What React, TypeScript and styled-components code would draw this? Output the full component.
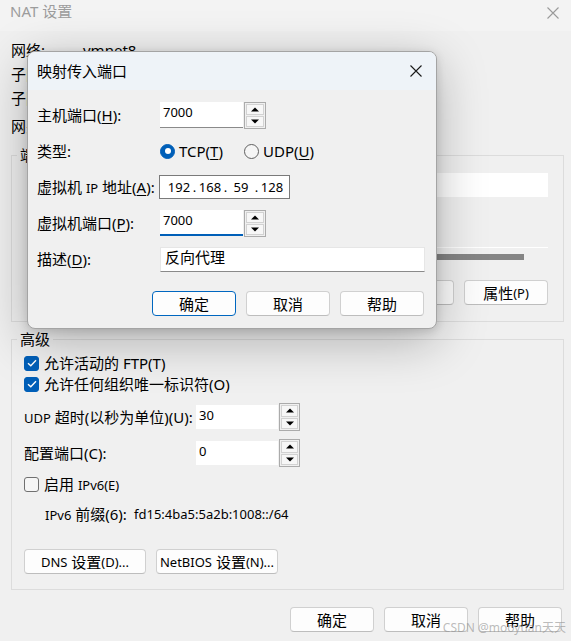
import React from "react";
import styled, { createGlobalStyle } from "styled-components";

const GlobalStyle = createGlobalStyle`
  html, body { margin: 0; padding: 0; background: #f0f0f0; }
  body { font-family: "Noto Sans", "Noto Sans CJK SC", sans-serif; color: #000; }
`;

const Window = styled.div`
  position: relative;
  width: 571px;
  height: 641px;
  overflow: hidden;
  background: #f0f0f0;
  font-size: 15px;
  line-height: 20px;
`;

const TitleBar = styled.div`
  height: 31px;
  box-sizing: border-box;
  padding: 1px 12px 0 10px;
  background: #f3f3f3;
  display: flex;
  align-items: flex-start;
  justify-content: space-between;
  color: #9c9c9c;
`;

const CloseGlyph = styled.div`
  display: flex;
  padding-top: 6px;
`;

const Body = styled.div`
  padding: 7px 7px 0 11px;
  display: flex;
  flex-direction: column;
`;

const InfoRow = styled.div<{ $gap?: number }>`
  display: flex;
  align-items: center;
  height: 24px;
  margin-top: ${({ $gap }) => $gap || 0}px;
`;

const InfoLabel = styled.span`
  width: 72px;
`;

const Group = styled.fieldset<{ $h: number; $top: number }>`
  margin: ${({ $top }) => $top}px 0 0 0;
  padding: 0 15px 0 12px;
  border: 1px solid #dcdcdc;
  min-width: 0;
  height: ${({ $h }) => $h}px;
  box-sizing: border-box;
  display: flex;
  flex-direction: column;
`;

const Legend = styled.legend`
  padding: 0 3px;
  margin-left: -7px;
  line-height: 20px;
`;

const ListBox = styled.div`
  margin-top: 8px;
  margin-left: 3px;
  height: 92px;
  display: flex;
  flex-direction: column;
`;

const ListHeader = styled.div`
  height: 24px;
  background: #fff;
`;

const ListArea = styled.div`
  flex: 1;
  border-bottom: 1px solid #fff;
`;

const HScroll = styled.div`
  height: 17px;
  display: flex;
  align-items: center;
  padding-right: 24px;
`;

const HThumb = styled.div`
  flex: 1;
  height: 6px;
  background: #858585;
`;

const ButtonRow = styled.div<{ $top: number; $justify?: string; $right?: number }>`
  display: flex;
  gap: 10px;
  margin-top: ${({ $top }) => $top}px;
  margin-right: ${({ $right }) => $right || 0}px;
  justify-content: ${({ $justify }) => $justify || "flex-end"};
`;

const Button = styled.div<{ $w?: number; $primary?: boolean }>`
  width: ${({ $w }) => $w || 84}px;
  height: 25px;
  box-sizing: border-box;
  border: 1px solid ${({ $primary }) => ($primary ? "#0067c0" : "#d0d0d0")};
  border-bottom-color: ${({ $primary }) => ($primary ? "#0067c0" : "#bdbdbd")};
  border-radius: 4px;
  background: #fdfdfd;
  display: flex;
  align-items: center;
  justify-content: center;
  font-size: 15px;
  white-space: nowrap;
`;

const SmallLatin = styled.span`
  font-size: 13px;
`;

const CheckRow = styled.div<{ $top: number }>`
  display: flex;
  align-items: center;
  gap: 5px;
  height: 20px;
  margin-top: ${({ $top }) => $top}px;
`;

const CheckBox = styled.div<{ $checked?: boolean }>`
  width: 15px;
  height: 15px;
  box-sizing: border-box;
  border-radius: 3px;
  background: ${({ $checked }) => ($checked ? "#005fb8" : "#f6f6f6")};
  border: 1px solid ${({ $checked }) => ($checked ? "#005fb8" : "#707070")};
  display: flex;
  align-items: center;
  justify-content: center;
`;

const FieldRow = styled.div<{ $top: number; $label: number }>`
  display: flex;
  align-items: center;
  height: 28px;
  margin-top: ${({ $top }) => $top}px;
  & > span:first-child {
    width: ${({ $label }) => $label}px;
    flex-shrink: 0;
  }
`;

const NumField = styled.div<{ $w: number; $h: number; $line?: "none" | "gray" | "focus" }>`
  width: ${({ $w }) => $w}px;
  height: ${({ $h }) => $h}px;
  box-sizing: border-box;
  background: #fff;
  padding: 0 3px;
  font-size: 13px;
  line-height: 20px;
  border-bottom: ${({ $line }) =>
    $line === "focus" ? "2px solid #005fb8" : $line === "gray" ? "1px solid #8a8a8a" : "none"};
`;

const SpinWrap = styled.div`
  display: flex;
  align-items: center;
  gap: 1px;
`;

const SpinBox = styled.div<{ $h: number; $w: number }>`
  width: ${({ $w }) => $w}px;
  height: ${({ $h }) => $h}px;
  box-sizing: border-box;
  border: 1px solid #ababab;
  padding: 1px;
  display: flex;
  flex-direction: column;
  gap: 1px;
  background: #f0f0f0;
`;

const SpinBtn = styled.div`
  flex: 1;
  border: 1px solid #d2d2d2;
  background: #f7f7f7;
  display: flex;
  align-items: center;
  justify-content: center;
`;

const PrefixRow = styled.div`
  display: flex;
  align-items: center;
  height: 20px;
  margin-top: 10px;
  padding-left: 21px;
  & > span:first-child {
    width: 89px;
  }
`;

const Value = styled.span`
  font-size: 13px;
`;

const Key = styled.span`
  text-decoration: underline;
  text-underline-offset: 2px;
`;

/* modal dialog on top of the NAT window */
const Dialog = styled.div`
  position: absolute;
  left: 27px;
  top: 51px;
  width: 410px;
  height: 278px;
  box-sizing: border-box;
  border: 1px solid #a4a4a4;
  border-radius: 8px;
  background: #f0f0f0;
  overflow: hidden;
  box-shadow: 0 12px 50px rgba(0, 0, 0, 0.28), 0 2px 10px rgba(0, 0, 0, 0.14);
`;

const DialogTitle = styled.div`
  height: 38px;
  background: #eef3f8;
  display: flex;
  align-items: center;
  justify-content: space-between;
  padding: 0 14px 0 9px;
`;

const DialogBody = styled.div`
  padding: 12px 11px 0 9px;
`;

const FormGrid = styled.div`
  display: grid;
  grid-template-columns: 123px 1fr;
  grid-auto-rows: 26px;
  row-gap: 10px;
  align-items: center;
`;

const RadioGroup = styled.div`
  display: flex;
  align-items: center;
`;

const RadioOption = styled.div<{ $w?: number }>`
  display: flex;
  align-items: center;
  gap: 4px;
  width: ${({ $w }) => ($w ? `${$w}px` : "auto")};
`;

const Radio = styled.div<{ $checked?: boolean }>`
  width: 15px;
  height: 15px;
  box-sizing: border-box;
  border-radius: 50%;
  background: ${({ $checked }) => ($checked ? "#005fb8" : "#f5f5f5")};
  border: 1px solid ${({ $checked }) => ($checked ? "#005fb8" : "#5f5f5f")};
  display: flex;
  align-items: center;
  justify-content: center;
  &::after {
    content: "";
    display: ${({ $checked }) => ($checked ? "block" : "none")};
    width: 6px;
    height: 6px;
    border-radius: 50%;
    background: #fff;
  }
`;

const IpBox = styled.div`
  margin-left: -1px;
  width: 131px;
  height: 24px;
  box-sizing: border-box;
  border: 1px solid #7a7a7a;
  background: #fff;
  padding-left: 6px;
  display: flex;
  align-items: center;
  font-size: 13px;
`;

const IpSeg = styled.span`
  width: 26px;
  text-align: center;
`;

const IpDot = styled.span`
  width: 5px;
  text-align: center;
`;

const TextField = styled.div`
  width: 265px;
  height: 25px;
  box-sizing: border-box;
  background: #fff;
  border: 1px solid #e6e6e6;
  border-bottom-color: #8a8a8a;
  padding: 0 4px;
  line-height: 19px;
`;

const Watermark = styled.div`
  position: absolute;
  right: 5px;
  bottom: 3px;
  font-size: 12px;
  color: rgba(150, 150, 150, 0.65);
`;

const Cross = ({ size, color }: { size: number; color: string }) => (
  <svg width={size} height={size} viewBox="0 0 12 12">
    <path d="M0.5 0.5 L11.5 11.5 M11.5 0.5 L0.5 11.5" stroke={color} strokeWidth="1.1" fill="none" />
  </svg>
);

const Tick = () => (
  <svg width="10" height="8" viewBox="0 0 10 8">
    <path d="M1 4.2 L3.8 6.8 L9 1.2" stroke="#fff" strokeWidth="1.4" fill="none" />
  </svg>
);

const Arrow = ({ down }: { down?: boolean }) => (
  <svg width="8" height="5" viewBox="0 0 8 5">
    <polygon points={down ? "0,0.5 8,0.5 4,4.5" : "0,4.5 8,4.5 4,0.5"} fill="#000" />
  </svg>
);

const Spinner = ({ w, h }: { w: number; h: number }) => (
  <SpinBox $w={w} $h={h}>
    <SpinBtn>
      <Arrow />
    </SpinBtn>
    <SpinBtn>
      <Arrow down />
    </SpinBtn>
  </SpinBox>
);

export default function App() {
  return (
    <>
      <GlobalStyle />
      <Window>
        <TitleBar>
          <span>NAT 设置</span>
          <CloseGlyph>
            <Cross size={12} color="#9a9a9a" />
          </CloseGlyph>
        </TitleBar>

        <Body>
          <InfoRow>
            <InfoLabel>网络:</InfoLabel>
            <span>vmnet8</span>
          </InfoRow>
          <InfoRow>
            <InfoLabel>子网 IP:</InfoLabel>
            <span>192.168.59.0</span>
          </InfoRow>
          <InfoRow>
            <InfoLabel>子网掩码:</InfoLabel>
            <span>255.255.255.0</span>
          </InfoRow>
          <InfoRow $gap={4}>
            <InfoLabel>网关 IP(G):</InfoLabel>
            <span>192.168.59.2</span>
          </InfoRow>

          <Group $h={177} $top={7}>
            <Legend>端口转发(F)</Legend>
            <ListBox>
              <ListHeader />
              <ListArea />
              <HScroll>
                <HThumb />
              </HScroll>
            </ListBox>
            <ButtonRow $top={15}>
              <Button>添加(A)...</Button>
              <Button>移除(R)</Button>
              <Button>
                属性<SmallLatin>(P)</SmallLatin>
              </Button>
            </ButtonRow>
          </Group>

          <Group $h={261} $top={7}>
            <Legend>高级</Legend>
            <CheckRow $top={4}>
              <CheckBox $checked>
                <Tick />
              </CheckBox>
              <span>允许活动的 FTP(T)</span>
            </CheckRow>
            <CheckRow $top={1}>
              <CheckBox $checked>
                <Tick />
              </CheckBox>
              <span>允许任何组织唯一标识符(O)</span>
            </CheckRow>
            <FieldRow $top={9} $label={172}>
              <span>
                <SmallLatin>UDP</SmallLatin> 超时(以秒为单位)(U):
              </span>
              <SpinWrap>
                <NumField $w={82} $h={24}>30</NumField>
                <Spinner w={21} h={28} />
              </SpinWrap>
            </FieldRow>
            <FieldRow $top={8} $label={172}>
              <span>配置端口(C):</span>
              <SpinWrap>
                <NumField $w={82} $h={24}>0</NumField>
                <Spinner w={21} h={28} />
              </SpinWrap>
            </FieldRow>
            <CheckRow $top={7}>
              <CheckBox />
              <span>
                启用 <SmallLatin>IPv6(E)</SmallLatin>
              </span>
            </CheckRow>
            <PrefixRow>
              <span>
                <SmallLatin>IPv6</SmallLatin> 前缀(6):
              </span>
              <Value>fd15:4ba5:5a2b:1008::/64</Value>
            </PrefixRow>
            <ButtonRow $top={25} $justify="flex-start">
              <Button $w={122}>
                <SmallLatin>DNS</SmallLatin>&nbsp;设置<SmallLatin>(D)...</SmallLatin>
              </Button>
              <Button $w={122}>
                <SmallLatin>NetBIOS</SmallLatin>&nbsp;设置<SmallLatin>(N)...</SmallLatin>
              </Button>
            </ButtonRow>
          </Group>

          <ButtonRow $top={17} $right={2}>
            <Button>确定</Button>
            <Button>取消</Button>
            <Button>帮助</Button>
          </ButtonRow>
        </Body>

        <Dialog>
          <DialogTitle>
            <span>映射传入端口</span>
            <Cross size={12} color="#1a1a1a" />
          </DialogTitle>
          <DialogBody>
            <FormGrid>
              <span>
                主机端口(<Key>H</Key>):
              </span>
              <SpinWrap>
                <NumField $w={83} $h={26} $line="gray">7000</NumField>
                <Spinner w={22} h={27} />
              </SpinWrap>

              <span>类型:</span>
              <RadioGroup>
                <RadioOption $w={84}>
                  <Radio $checked />
                  <span>
                    TCP(<Key>T</Key>)
                  </span>
                </RadioOption>
                <RadioOption>
                  <Radio />
                  <span>
                    UDP(<Key>U</Key>)
                  </span>
                </RadioOption>
              </RadioGroup>

              <span>
                虚拟机 <SmallLatin>IP</SmallLatin> 地址(<Key>A</Key>):
              </span>
              <IpBox>
                <IpSeg>192</IpSeg>
                <IpDot>.</IpDot>
                <IpSeg>168</IpSeg>
                <IpDot>.</IpDot>
                <IpSeg>59</IpSeg>
                <IpDot>.</IpDot>
                <IpSeg>128</IpSeg>
              </IpBox>

              <span>
                虚拟机端口(<Key>P</Key>):
              </span>
              <SpinWrap>
                <NumField $w={83} $h={26} $line="focus">7000</NumField>
                <Spinner w={22} h={27} />
              </SpinWrap>

              <span>
                描述(<Key>D</Key>):
              </span>
              <TextField>反向代理</TextField>
            </FormGrid>
            <ButtonRow $top={19} $right={1}>
              <Button $primary>确定</Button>
              <Button>取消</Button>
              <Button>帮助</Button>
            </ButtonRow>
          </DialogBody>
        </Dialog>

        <Watermark>CSDN @mooyuan天天</Watermark>
      </Window>
    </>
  );
}
